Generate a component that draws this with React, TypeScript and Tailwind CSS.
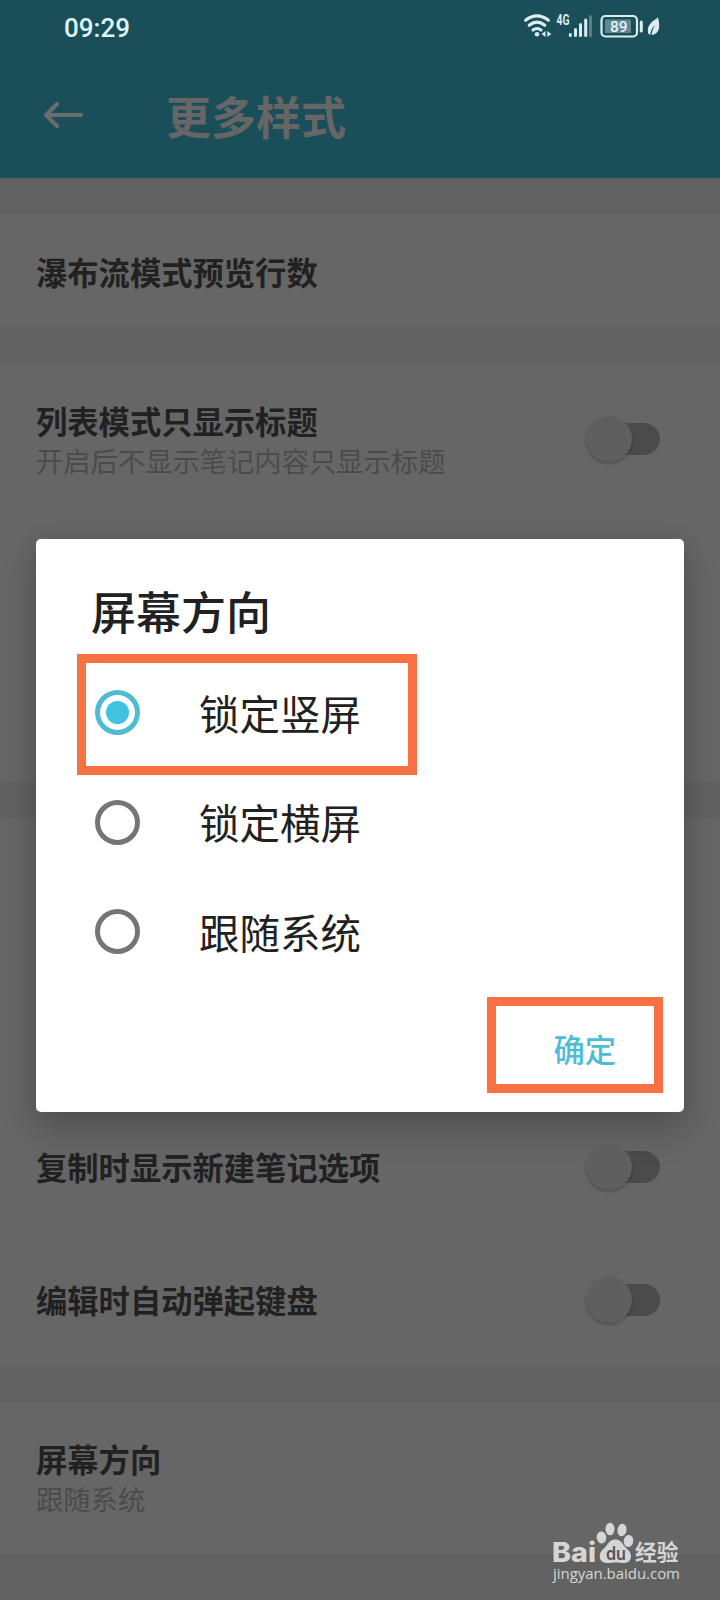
import type { ReactNode } from "react";

function StatusBar() {
  return (
    <div className="flex h-[54px] items-center pl-[64px]">
      <span className="mr-auto pt-[2px] font-['Roboto','Noto_Sans_CJK_SC',sans-serif] text-[26px] leading-[30px] font-medium text-[#dff4fb]">
        09:29
      </span>
      <svg className="h-[54px] w-[220px] shrink-0" viewBox="0 0 220 54" fill="none" stroke="#dcecef">
        <g strokeWidth="3.1" strokeLinecap="round">
          <path d="M25.600 20.200Q37 11.600 48.400 20.200" />
          <path d="M29.200 25.200Q37 19 44.800 25.200" />
          <path d="M33 30Q37 27 41 30" />
        </g>
        <circle cx="37" cy="34.300" r="2.300" fill="#dcecef" stroke="none" />
        <path d="M45.500 31v6l-4-3zM47.300 31v6l4-3z" fill="#dcecef" stroke="none" />
        <g strokeWidth="3" strokeLinecap="round">
          <path d="M70.300 34.500v1M75.500 29.500v6M80.500 24.500v11M85.700 20v15.500" />
          <path d="M90.500 16.500v19" stroke="#56818a" />
        </g>
        <rect x="101.500" y="16" width="35.500" height="20.500" rx="4" strokeWidth="2.2" />
        <rect x="105" y="19.500" width="26" height="13.500" rx="1" fill="#5f8a92" stroke="none" />
        <path d="M141.300 22v9" strokeWidth="3" strokeLinecap="round" />
        <path d="M158 17.500C151 22 146.500 26 148.200 33.500L150 35C151 30 152.500 27.500 155 25C153 29 151.800 32 151.500 35C158.500 34.500 161 28 158 17.500Z" fill="#dcecef" stroke="none" />
        <text x="56.500" y="25" textLength="13" lengthAdjust="spacingAndGlyphs" className="fill-[#dcecef] font-['Roboto',sans-serif] text-[14px] font-bold" stroke="none">4G</text>
        <text x="110" y="32" textLength="17.500" className="fill-[#e6f2f4] font-['Roboto',sans-serif] text-[15.500px] font-medium" stroke="none">89</text>
      </svg>
    </div>
  );
}

function Toggle() {
  return (
    <div className="flex h-[46px] w-[74px] items-center">
      <div className="z-10 size-[46px] shrink-0 rounded-full bg-[#5f5f5f] shadow-[0_2px_3px_rgba(0,0,0,0.22)]" />
      <div className="-ml-[36px] h-8 w-[64px] shrink-0 rounded-full bg-[#4b4b4b]" />
    </div>
  );
}

function Row({ label, note, toggle, className }: { label: string; note?: string; toggle?: boolean; className: string }) {
  return (
    <div className={`flex justify-between pr-[60px] pl-9 ${className}`}>
      <div className={note || !toggle ? "flex flex-col" : "flex flex-col pt-[3px]"}>
        <span className="text-[31.300px] leading-[40px] font-bold text-[#212121]">{label}</span>
        {note && <span className="text-[27.300px] leading-[38px] text-[#4b4b4b]">{note}</span>}
      </div>
      {toggle && (
        <div className={note ? "pt-[15px]" : ""}>
          <Toggle />
        </div>
      )}
    </div>
  );
}

function Section({ className, children }: { className: string; children?: ReactNode }) {
  return <section className={`bg-[#666666] ${className}`}>{children}</section>;
}

function Option({ label, checked }: { label: string; checked?: boolean }) {
  return (
    <div className="flex h-[109.500px] items-center">
      <span className={`flex size-[45px] items-center justify-center rounded-full border-[5px] ${checked ? "border-[#4fbcd3]" : "border-[#757575]"}`}>
        {checked && <span className="size-[23px] rounded-full bg-[#3fc3e0]" />}
      </span>
      <span className="ml-[59px] text-[40.500px] leading-[50px] text-[#212121]">{label}</span>
    </div>
  );
}

function Watermark() {
  return (
    <svg className="absolute top-[1515px] left-[545px] h-[75px] w-[145px]" viewBox="0 0 145 75" fill="#d6d6d6">
      <text x="7" y="47" textLength="44" lengthAdjust="spacingAndGlyphs" className="font-['Inter',sans-serif] text-[27.500px] font-extrabold">Bai</text>
      <ellipse cx="56.500" cy="22.500" rx="4.800" ry="6" transform="rotate(-8 56.500 22.500)" />
      <ellipse cx="65" cy="14" rx="4.500" ry="6.300" />
      <ellipse cx="77" cy="15" rx="4.500" ry="6.300" transform="rotate(8 77 15)" />
      <ellipse cx="83.500" cy="26" rx="4.800" ry="6" transform="rotate(8 83.500 26)" />
      <path d="M70 24.500C64 24.500 63 30 58.500 34C53 38 53 47.500 62 48C66 48.500 68 47 72 47.500C76 48 85 50 86 42C86.500 36 81 34 78.500 30C76.500 27 75 24.500 70 24.500Z" />
      <text x="61" y="44.500" textLength="20" lengthAdjust="spacingAndGlyphs" className="fill-[#555555] font-['Inter',sans-serif] text-[18px] font-semibold">du</text>
      <text x="90" y="45" textLength="43.500" lengthAdjust="spacingAndGlyphs" className="font-['Noto_Sans_CJK_SC',sans-serif] text-[22px] font-bold">经验</text>
      <text x="8" y="64" textLength="127" className="font-['Open_Sans',sans-serif] text-[15px] font-medium">jingyan.baidu.com</text>
    </svg>
  );
}

export default function App() {
  return (
    <main className="relative h-[1600px] w-[720px] overflow-hidden bg-[#626262] font-['Noto_Sans_CJK_SC',sans-serif]">
      <header className="h-[178px] bg-[#1a4f5a] shadow-[0_1px_3px_rgba(0,0,0,0.1)]">
        <StatusBar />
        <div className="flex h-[122px] items-center pl-[43px]">
          <svg className="h-[28px] w-[41px]" viewBox="0 0 41 28" fill="none" stroke="#6a6d6d" strokeWidth="4.2" strokeLinecap="round" strokeLinejoin="round">
            <path d="M38 14H3M14 3L3 14L14 25" />
          </svg>
          <h1 className="ml-[82px] pt-[2px] text-[45px] leading-[60px] font-bold text-[#666666]">更多样式</h1>
        </div>
      </header>

      <Section className="mt-[35px] h-[113px]">
        <Row className="pt-[39px]" label="瀑布流模式预览行数" />
      </Section>
      <Section className="mt-[38px] h-[418px]">
        <Row className="pt-[37px]" label="列表模式只显示标题" note="开启后不显示笔记内容只显示标题" toggle />
      </Section>
      <Section className="mt-[36px] h-[548px] pt-[326px]">
        <Row className="h-[133px]" label="复制时显示新建笔记选项" toggle />
        <Row className="" label="编辑时自动弹起键盘" toggle />
      </Section>
      <Section className="mt-[37px] h-[152px]">
        <Row className="pt-[36px]" label="屏幕方向" note="跟随系统" />
      </Section>

      <div role="dialog" className="absolute top-[539px] left-9 h-[573px] w-[648px] rounded-[5px] bg-white pl-[59px] shadow-[0_18px_36px_rgba(0,0,0,0.2),0_0_22px_rgba(0,0,0,0.08)]">
        <h2 className="-ml-1 pt-[42px] text-[45px] leading-[60px] font-medium text-[#212121]">屏幕方向</h2>
        <div className="mt-[17px]">
          <Option label="锁定竖屏" checked />
          <Option label="锁定横屏" />
          <Option label="跟随系统" />
        </div>
        <div className="mt-[42.500px] mr-[68px] flex justify-end">
          <button className="text-[31.300px] leading-[40px] font-medium text-[#4cbdd6]">确定</button>
        </div>
        <div className="absolute top-[115px] left-[41px] h-[121px] w-[340px] border-[9px] border-[#f87143]" />
        <div className="absolute top-[458px] left-[451px] h-[96px] w-[176px] border-[9px] border-[#f87143]" />
      </div>

      <Watermark />
    </main>
  );
}
